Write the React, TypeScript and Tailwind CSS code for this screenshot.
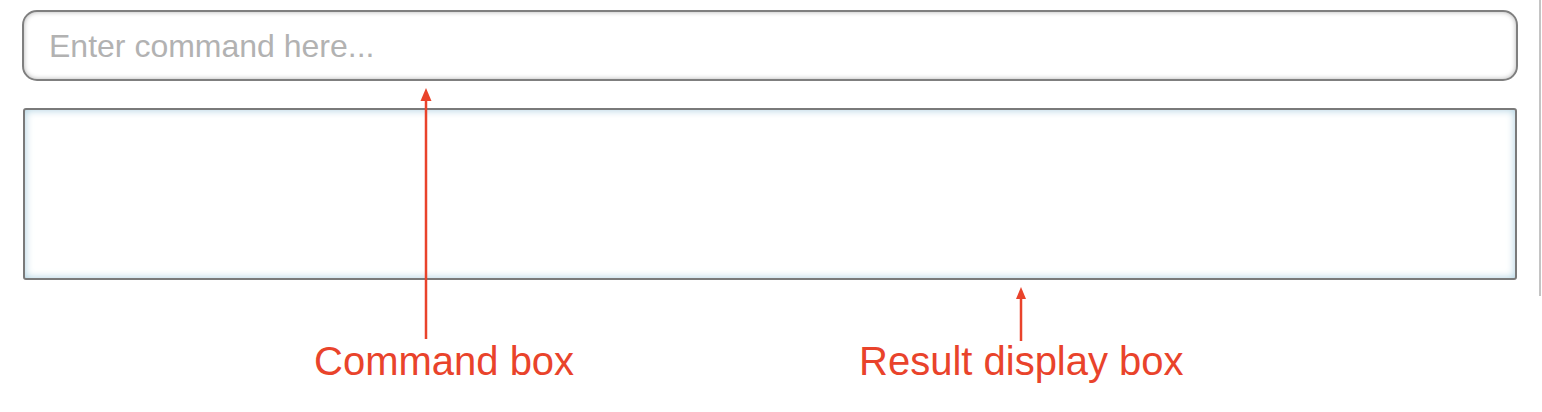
import { useState } from 'react';

const RED = '#e9432b';

function Annotations() {
  return (
    <>
      {/* arrows */}
      <svg className="absolute inset-0 pointer-events-none" width={1542} height={412}>
        <line x1={426} y1={100} x2={426} y2={339} stroke={RED} strokeWidth={2.5} />
        <polygon points="426,88 420.5,101 431.5,101" fill={RED} />
        <line x1={1021} y1={298} x2={1021} y2={341} stroke={RED} strokeWidth={2.5} />
        <polygon points="1021,287 1016,299 1026,299" fill={RED} />
      </svg>

      <span className="absolute left-[314px] top-[341px] text-[40px] leading-[40px] text-[#e9432b] font-['Liberation_Sans',Arial,sans-serif] whitespace-nowrap">
        Command box
      </span>
      <span className="absolute left-[859px] top-[341px] text-[40px] leading-[40px] text-[#e9432b] font-['Liberation_Sans',Arial,sans-serif] whitespace-nowrap">
        Result display box
      </span>
    </>
  );
}

export default function App() {
  const [command, setCommand] = useState('');

  return (
    <div className="relative w-[1542px] h-[412px] bg-white flex font-['Liberation_Sans',Arial,sans-serif]">
      <div className="w-[1539px] pt-[10px]">
        {/* Command box */}
        <div className="ml-[22px] w-[1496px] h-[71px] rounded-[15px] border-2 border-[#7f7f7f] bg-white shadow-[inset_0_0_5px_rgba(0,0,0,0.3)] flex items-center">
          <input
            value={command}
            onChange={(e) => setCommand(e.target.value)}
            placeholder="Enter command here..."
            className="w-full bg-transparent pl-[25px] pr-4 text-[32px] text-[#333] placeholder:text-[#b2b2b2] outline-none"
          />
        </div>

        {/* Result display box */}
        <div className="ml-[23px] mt-[27px] w-[1494px] h-[172px] rounded-[3px] border-2 border-[#7a7a7a] bg-white shadow-[inset_0_0_8px_#a8cedf]" />
      </div>

      {/* window edge */}
      <div className="w-[2px] h-[296px] bg-[#c4c4c4]" />

      <Annotations />
    </div>
  );
}
